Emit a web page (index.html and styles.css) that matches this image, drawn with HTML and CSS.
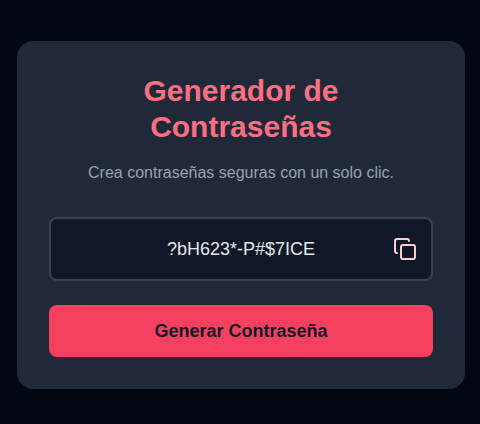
FILE: index.html
```html
<!DOCTYPE html>
<html lang="es">
<head>
<meta charset="utf-8">
<meta name="viewport" content="width=device-width, initial-scale=1">
<title>Generador de Contraseñas</title>
<link rel="stylesheet" href="styles.css">
</head>
<body>
<main class="card">
  <header class="header">
    <h1 class="title">Generador de Contraseñas</h1>
    <p class="subtitle">Crea contraseñas seguras con un solo clic.</p>
  </header>
  <div class="field">
    <input class="password" type="text" value="?bH623*-P#$7ICE" aria-label="Contraseña" readonly>
    <button class="copy" type="button" aria-label="Copiar">
      <svg viewBox="0 0 24 24" width="24" height="24" fill="none" stroke="currentColor" stroke-width="2" stroke-linecap="round" stroke-linejoin="round" aria-hidden="true">
        <rect x="8" y="8" width="14" height="14" rx="2"/>
        <path d="M4 16c-1.1 0-2-.9-2-2V4c0-1.1.9-2 2-2h10c1.1 0 2 .9 2 2"/>
      </svg>
    </button>
  </div>
  <button class="generate" type="button">Generar Contraseña</button>
</main>
</body>
</html>
```
FILE: styles.css
```css
* {
  box-sizing: border-box;
}

body {
  display: flex;
  align-items: center;
  justify-content: center;
  min-height: 100vh;
  margin: 0;
  padding: 22px 15px 16px 17px;
  background: #030712;
  color: #f3f4f6;
  font-family: "Liberation Sans", Arial, sans-serif;
}

.card {
  display: flex;
  flex-direction: column;
  gap: 24px;
  width: 100%;
  max-width: 448px;
  padding: 32px;
  border-radius: 16px;
  background: #1f2937;
}

.header {
  padding-bottom: 8px;
  text-align: center;
}

.title {
  margin: 0 0 16px;
  padding: 0 64px;
  color: #ff6e82;
  font-size: 30px;
  line-height: 36px;
}

.subtitle {
  margin: 0;
  color: #99a1af;
  font-size: 16px;
  line-height: 24px;
}

.field {
  display: flex;
  align-items: center;
  height: 64px;
  padding: 0 14px;
  border: 2px solid #364153;
  border-radius: 8px;
  background: #101828;
}

.password {
  flex: 1;
  min-width: 0;
  padding: 0 0 0 24px;
  border: 0;
  outline: 0;
  background: transparent;
  color: #e5e7eb;
  font: 18px/28px "Liberation Sans", Arial, sans-serif;
  text-align: center;
}

.copy {
  display: flex;
  padding: 0;
  border: 0;
  background: transparent;
  color: #ffccd3;
  cursor: pointer;
}

.generate {
  height: 52px;
  border: 0;
  border-radius: 8px;
  background: #f6405f;
  color: #101828;
  font: bold 18px/28px "Liberation Sans", Arial, sans-serif;
  cursor: pointer;
}
```
